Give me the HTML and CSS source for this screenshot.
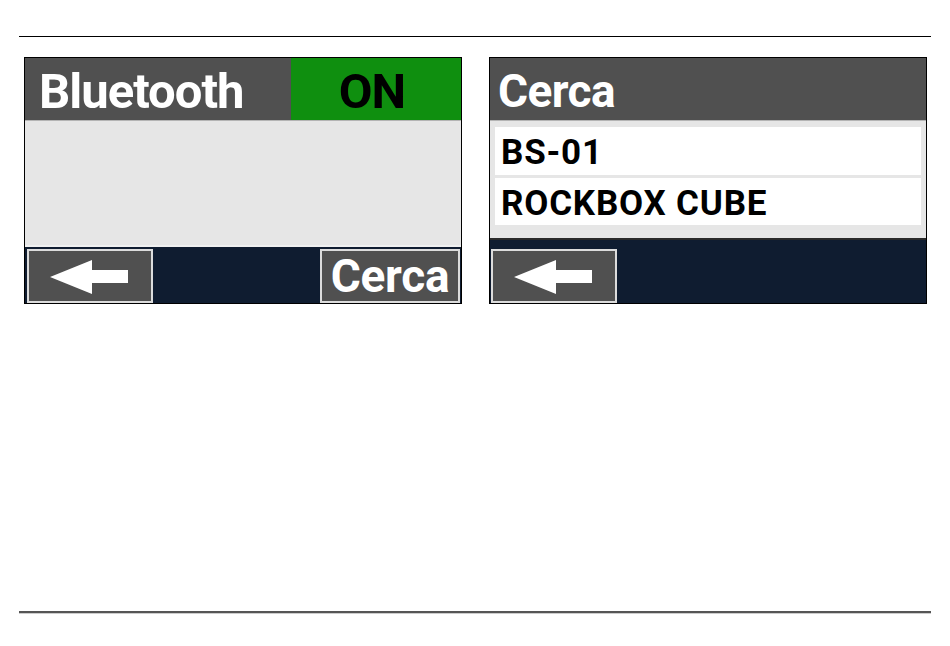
FILE: index.html
```html
<!DOCTYPE html>
<html>
<head>
<meta charset="utf-8">
<link rel="stylesheet" href="styles.css">
</head>
<body>
<div class="page">
  <div class="rule-top"></div>
  <div class="panels">
    <div class="screen">
      <div class="header">
        <div class="title">Bluetooth</div>
        <div class="state">ON</div>
      </div>
      <div class="body body-left"></div>
      <div class="footer footer-left">
        <div class="btn btn-back">
          <svg width="126" height="54" viewBox="0 0 126 54"><polygon points="23,28 65,11 65,21 101,21 101,34 65,34 65,45" fill="#fff"/></svg>
        </div>
        <div class="btn btn-text">Cerca</div>
      </div>
    </div>
    <div class="screen">
      <div class="header">
        <div class="title title-right">Cerca</div>
      </div>
      <div class="body body-right">
        <div class="item">BS-01</div>
        <div class="item">ROCKBOX CUBE</div>
      </div>
      <div class="footer footer-right">
        <div class="btn btn-back btn-back-right">
          <svg width="126" height="54" viewBox="0 0 126 54"><polygon points="23,28 65,11 65,21 101,21 101,34 65,34 65,45" fill="#fff"/></svg>
        </div>
      </div>
    </div>
  </div>
  <div class="rule-bottom"></div>
</div>
</body>
</html>
```
FILE: styles.css
```css
html, body {
  margin: 0;
  padding: 0;
  background: #fff;
}
.page {
  width: 950px;
  height: 646px;
  display: flex;
  flex-direction: column;
  font-family: Roboto, "Liberation Sans", sans-serif;
}
.rule-top {
  margin: 36px 19px 0 19px;
  height: 1px;
  background: #000;
}
.panels {
  display: flex;
  gap: 27px;
  margin: 20px 0 0 24px;
}
.screen {
  width: 436px;
  height: 245px;
  border: 1px solid #000;
  display: flex;
  flex-direction: column;
  background: #e6e6e6;
}
.header {
  height: 62px;
  background: #505050;
  border-bottom: 1px solid #b4b4b4;
  display: flex;
  align-items: stretch;
  flex: none;
}
.title {
  flex: 1;
  color: #fff;
  font-weight: 700;
  font-size: 49px;
  line-height: 68px;
  padding-left: 14px;
  letter-spacing: -1px;
  white-space: nowrap;
}
.title-right {
  padding-left: 8px;
  font-size: 46px;
  line-height: 67px;
  letter-spacing: -0.6px;
}
.state {
  width: 170px;
  background: #0f8f0f;
  color: #000;
  font-weight: 700;
  font-size: 49px;
  line-height: 68px;
  text-align: center;
  padding-right: 8px;
  box-sizing: border-box;
  letter-spacing: -1px;
}
.body {
  flex: none;
}
.body-left {
  height: 124px;
  border-bottom: 2px solid #f0f0f0;
}
.body-right {
  height: 119px;
  padding: 6px 5px 0 5px;
  box-sizing: border-box;
  display: flex;
  flex-direction: column;
  gap: 3px;
  border-bottom: 2px solid #2a2a2a;
}
.item {
  height: 48px;
  background: #fff;
  color: #000;
  font-weight: 700;
  font-size: 35px;
  line-height: 52px;
  padding-left: 6px;
  letter-spacing: 0.8px;
  white-space: nowrap;
}
.item + .item {
  height: 47px;
}
.footer {
  flex: 1;
  background: #0f1c30;
  display: flex;
  justify-content: space-between;
  align-items: flex-end;
}
.btn {
  background: #505050;
  border: 2px solid #dcdcdc;
  box-sizing: border-box;
  height: 54px;
  display: flex;
  align-items: center;
  justify-content: center;
  overflow: hidden;
}
.btn-back {
  width: 126px;
  margin-left: 2px;
}
.btn-back svg {
  display: block;
  flex: none;
}
.btn-back-right {
  margin-left: 1px;
}
.btn-text {
  width: 140px;
  margin-right: 1px;
  color: #fff;
  font-weight: 700;
  font-size: 46px;
  line-height: 54px;
  letter-spacing: -0.3px;
}
.rule-bottom {
  margin: 307px 19px 0 19px;
  height: 2px;
  background: #555;
  border-bottom: 1px solid #ccc;
}
```
